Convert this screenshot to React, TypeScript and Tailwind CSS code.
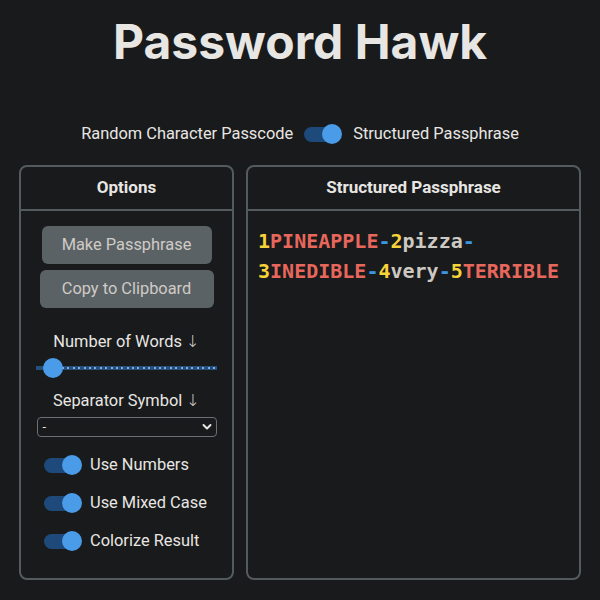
import { Fragment } from 'react'

const WORDS: { n: string; w: string; upper: boolean }[] = [
  { n: '1', w: 'PINEAPPLE', upper: true },
  { n: '2', w: 'pizza', upper: false },
  { n: '3', w: 'INEDIBLE', upper: true },
  { n: '4', w: 'very', upper: false },
  { n: '5', w: 'TERRIBLE', upper: true },
]

function Toggle() {
  return (
    <span className="relative inline-flex items-center w-[38px] h-[20px] shrink-0">
      <span className="w-[36px] h-[15px] rounded-full bg-[#1d4a7a]" />
      <span className="absolute right-0 top-0 w-[20px] h-[20px] rounded-full bg-[#4a9be8]" />
    </span>
  )
}

function Slider() {
  const dots = Array.from({ length: 29 })
  return (
    <div className="relative mx-[15px] h-[20px] flex items-center">
      <div className="w-full h-[4px] bg-[#26507a] flex items-center justify-between pl-[26px] pr-[2px]">
        {dots.map((_, i) => (
          <span key={i} className="w-[2px] h-[2px] bg-[#7aaee0]" />
        ))}
      </div>
      <span className="absolute left-[7px] top-0 w-[20px] h-[20px] rounded-full bg-[#4a9be8]" />
    </div>
  )
}

function Option({ label }: { label: string }) {
  return (
    <div className="flex items-center gap-[8px] pl-[23px] h-[38px]">
      <Toggle />
      <span>{label}</span>
    </div>
  )
}

function Arrow() {
  return <span className="font-['DejaVu_Sans',sans-serif] font-light text-[#d8d4cf]">↓</span>
}

export default function App() {
  return (
    <div className="min-h-[600px] bg-[#181a1b] text-[#e8e6e3] font-['Roboto',sans-serif] text-[16.4px] px-[19px]">
      <h1 className="pt-[12px] h-[86px] text-center font-['Inter',sans-serif] font-bold text-[48px] leading-[60px] text-[#e8e6e3]">
        Password Hawk
      </h1>

      <div className="mt-[36px] h-[24px] flex items-center justify-center gap-[11px]">
        <span>Random Character Passcode</span>
        <Toggle />
        <span>Structured Passphrase</span>
      </div>

      <div className="mt-[19px] flex gap-[12px] h-[415px]">
        <div className="w-[215px] shrink-0 border-2 border-[#545b5e] rounded-[8px] flex flex-col">
          <div className="h-[44px] flex items-center justify-center font-bold text-[17px] border-b-2 border-[#545b5e]">
            Options
          </div>
          <div className="flex flex-col items-center pt-[15px] gap-[6px]">
            <button className="w-[170px] h-[38px] rounded-[6px] bg-[#5b6266] text-[#cfcbc5]">
              Make Passphrase
            </button>
            <button className="w-[174px] h-[38px] rounded-[6px] bg-[#5b6266] text-[#cfcbc5]">
              Copy to Clipboard
            </button>
          </div>
          <div className="mt-[22px] text-center leading-[24px]">
            Number of Words <Arrow />
          </div>
          <div className="mt-[4px]">
            <Slider />
          </div>
          <div className="mt-[11px] text-center leading-[24px]">
            Separator Symbol <Arrow />
          </div>
          <div className="relative mt-[4px] mx-auto w-[180px] h-[20px] border border-[#6a7073] rounded-[4px] text-[13px] leading-[18px] pl-[5px]">
            -
            <svg
              className="absolute right-[4px] top-[5px]"
              width="10"
              height="8"
              viewBox="0 0 10 8"
              fill="none"
              stroke="#e8e6e3"
              strokeWidth="2"
              strokeLinecap="round"
              strokeLinejoin="round"
            >
              <path d="M1.5 2l3.5 3.5L8.5 2" />
            </svg>
          </div>
          <div className="mt-[9px] flex flex-col">
            <Option label="Use Numbers" />
            <Option label="Use Mixed Case" />
            <Option label="Colorize Result" />
          </div>
        </div>

        <div className="flex-1 border-2 border-[#545b5e] rounded-[8px] flex flex-col">
          <div className="h-[44px] flex items-center justify-center font-bold text-[17px] border-b-2 border-[#545b5e]">
            Structured Passphrase
          </div>
          <div className="px-[10px] pt-[15px] font-['DejaVu_Sans_Mono',monospace] font-bold text-[20px] leading-[30px]">
            {WORDS.map((item, i) => (
              <Fragment key={item.n}>
                <span className="whitespace-nowrap">
                  <span className="text-[#f8d23a]">{item.n}</span>
                  <span className={item.upper ? 'text-[#e8675c]' : 'text-[#cdc8c2]'}>{item.w}</span>
                  {i < WORDS.length - 1 && <span className="text-[#3c95e0]">-</span>}
                </span>
                <wbr />
              </Fragment>
            ))}
          </div>
        </div>
      </div>
    </div>
  )
}
